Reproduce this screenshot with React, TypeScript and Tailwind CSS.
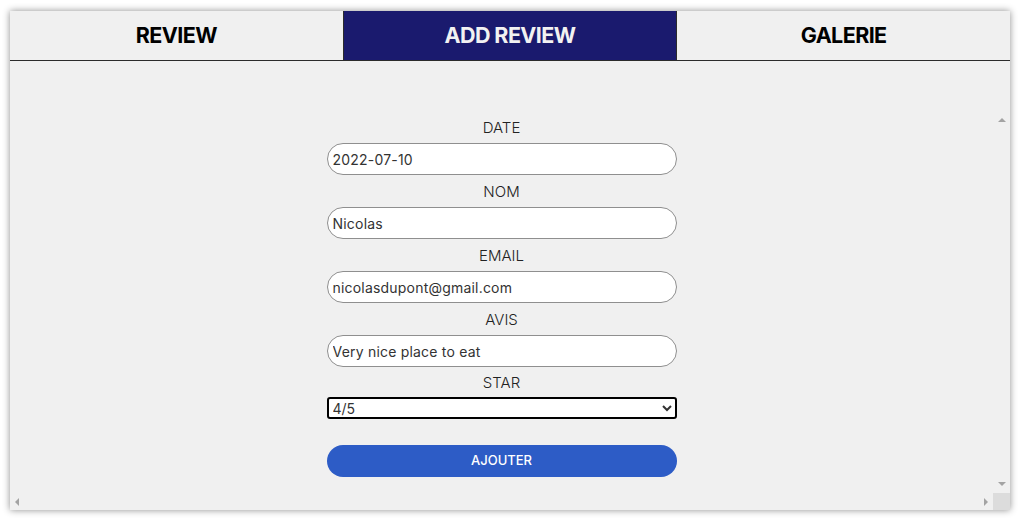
import { useState } from "react";

const tabs = ["REVIEW", "ADD REVIEW", "GALERIE"];

function Field({
  label,
  value,
  type = "text",
}: {
  label: string;
  value: string;
  type?: string;
}) {
  return (
    <div className="flex flex-col">
      <label className="flex h-[32px] items-center justify-center pt-[3px] text-[15px] font-light text-[#222]">
        {label}
      </label>
      <input
        type={type}
        defaultValue={value}
        className="h-[32px] w-[350px] rounded-full border border-[#8f8f8f] bg-white px-[5px] text-[14px] tracking-[0.2px] text-[#333] outline-none"
      />
    </div>
  );
}

function Arrow({ dir }: { dir: "up" | "down" | "left" | "right" }) {
  const points = {
    up: "0,4 4,0 8,4",
    down: "0,0 8,0 4,4",
    left: "4,0 4,8 0,4",
    right: "0,0 0,8 4,4",
  }[dir];
  const vertical = dir === "up" || dir === "down";
  return (
    <svg
      width={vertical ? 8 : 4}
      height={vertical ? 4 : 8}
      viewBox={vertical ? "0 0 8 4" : "0 0 4 8"}
    >
      <polygon points={points} fill="#a3a3a3" />
    </svg>
  );
}

export default function App() {
  const [active, setActive] = useState(1);

  return (
    <div className="min-h-[521px] bg-white pt-[11px] font-['Inter',sans-serif]">
      <div className="mx-[10px] flex h-[499px] w-[1000px] flex-col bg-[#f0f0f0] shadow-[0_0_7px_rgba(0,0,0,0.45)]">
        <nav className="flex h-[50px] border-b border-[#2b2b2b]">
          {tabs.map((tab, i) => (
            <button
              key={tab}
              type="button"
              onClick={() => setActive(i)}
              className={
                i === active
                  ? "flex flex-1 items-center justify-center border-x border-[#2b2b2b] bg-[#1a1a6e] text-[21.5px] font-bold tracking-[-0.6px] text-[#f2f2f2]"
                  : "flex flex-1 items-center justify-center text-[21.5px] font-bold tracking-[-0.6px] text-black"
              }
            >
              {tab}
            </button>
          ))}
        </nav>

        <div className="h-[50px]" />

        <div className="flex min-h-0 flex-1 flex-col">
          <div className="flex min-h-0 flex-1">
            <form
              className="flex flex-1 flex-col items-center"
              onSubmit={(e) => e.preventDefault()}
            >
              <Field label="DATE" value="2022-07-10" />
              <Field label="NOM" value="Nicolas" />
              <Field label="EMAIL" value="nicolasdupont@gmail.com" />
              <Field label="AVIS" value="Very nice place to eat" />
              <div className="flex flex-col">
                <label className="flex h-[30px] items-center justify-center pt-[3px] text-[15px] font-light text-[#222]">
                  STAR
                </label>
                <select
                  defaultValue="4"
                  className="h-[22px] w-[350px] rounded-[3px] border-2 border-black bg-white pl-0 text-[14px] text-[#333]"
                >
                  <option value="1">1/5</option>
                  <option value="2">2/5</option>
                  <option value="3">3/5</option>
                  <option value="4">4/5</option>
                  <option value="5">5/5</option>
                </select>
              </div>
              <button
                type="submit"
                className="mt-[26px] h-[32px] w-[350px] rounded-full bg-[#2d5cc6] text-[13px] font-medium text-white"
              >
                AJOUTER
              </button>
            </form>
            <div className="flex w-[17px] flex-col items-center justify-between py-[7px]">
              <Arrow dir="up" />
              <Arrow dir="down" />
            </div>
          </div>
          <div className="flex h-[17px]">
            <div className="flex flex-1 items-center justify-between px-[5px]">
              <Arrow dir="left" />
              <Arrow dir="right" />
            </div>
            <div className="w-[17px] bg-[#dcdcdc]" />
          </div>
        </div>
      </div>
    </div>
  );
}
